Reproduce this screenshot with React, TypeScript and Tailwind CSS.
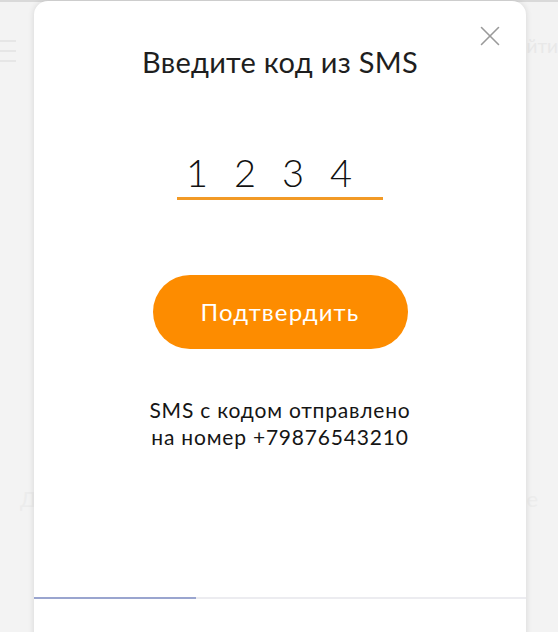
import React from 'react';

const CloseIcon = () => (
  <svg width="20" height="20" viewBox="0 0 20 20" fill="none" stroke="#9a9a9a" strokeWidth="1.6" strokeLinecap="round">
    <path d="M1.5 1.5 L18.5 18.5" />
    <path d="M18.5 1.5 L1.5 18.5" />
  </svg>
);

export default function App() {
  const code = ['1', '2', '3', '4'];

  return (
    <div
      className="relative w-[558px] h-[632px] overflow-hidden bg-[#f3f3f3]"
      style={{ fontFamily: 'Lato, "Open Sans", "Noto Sans", sans-serif' }}
    >
      {/* page behind the modal */}
      <div className="h-[2px] w-full bg-[#d9d9d9]" />
      <div className="flex items-start justify-between pt-[38px]">
        <div className="flex flex-col gap-[8px]">
          <span className="block w-[16px] h-[2px] bg-[#e6e6e6]" />
          <span className="block w-[16px] h-[2px] bg-[#e6e6e6]" />
          <span className="block w-[16px] h-[2px] bg-[#e6e6e6]" />
        </div>
        <span className="-mt-[8px] text-[19px] text-[#e8e8e8]">Войти</span>
      </div>
      <div className="mt-[420px] flex justify-between px-[20px] text-[22px] text-[#ececec]">
        <span>Д</span>
        <span>е</span>
      </div>

      {/* modal */}
      <div className="absolute left-[34px] top-[1px] w-[492px] h-[680px] rounded-t-[14px] bg-white shadow-[0_0_6px_rgba(0,0,0,0.12)] flex flex-col items-center">
        <button className="absolute right-[26px] top-[25px]">
          <CloseIcon />
        </button>

        <h2 className="mt-[43px] text-[29px] leading-[36px] tracking-[0.3px] text-[#1e1e1e] font-normal">
          Введите код из SMS
        </h2>

        <div className="mt-[70px] flex flex-col items-center">
          <div className="flex w-[206px] gap-[8px] text-[38px] leading-[44px] font-light text-[#111]">
            {code.map((d, i) => (
              <span key={i} className="w-[40px] text-center">{d}</span>
            ))}
          </div>
          <div className="mt-[3px] h-[3px] w-[206px] bg-[#f29a26]" />
        </div>

        <button className="mt-[75px] w-[255px] h-[74px] rounded-full bg-[#fd8c00] text-white text-[24px] tracking-[1.1px]">
          Подтвердить
        </button>

        <p className="mt-[47px] text-center text-[21px] leading-[27px] tracking-[0.8px] text-[#151515]">
          SMS с кодом отправлено
          <br />
          на номер +79876543210
        </p>

        <div className="mt-[147px] w-full h-[2px] bg-[#ececf0]">
          <div className="h-full w-[162px] bg-[#9aa5cf]" />
        </div>
      </div>
    </div>
  );
}
